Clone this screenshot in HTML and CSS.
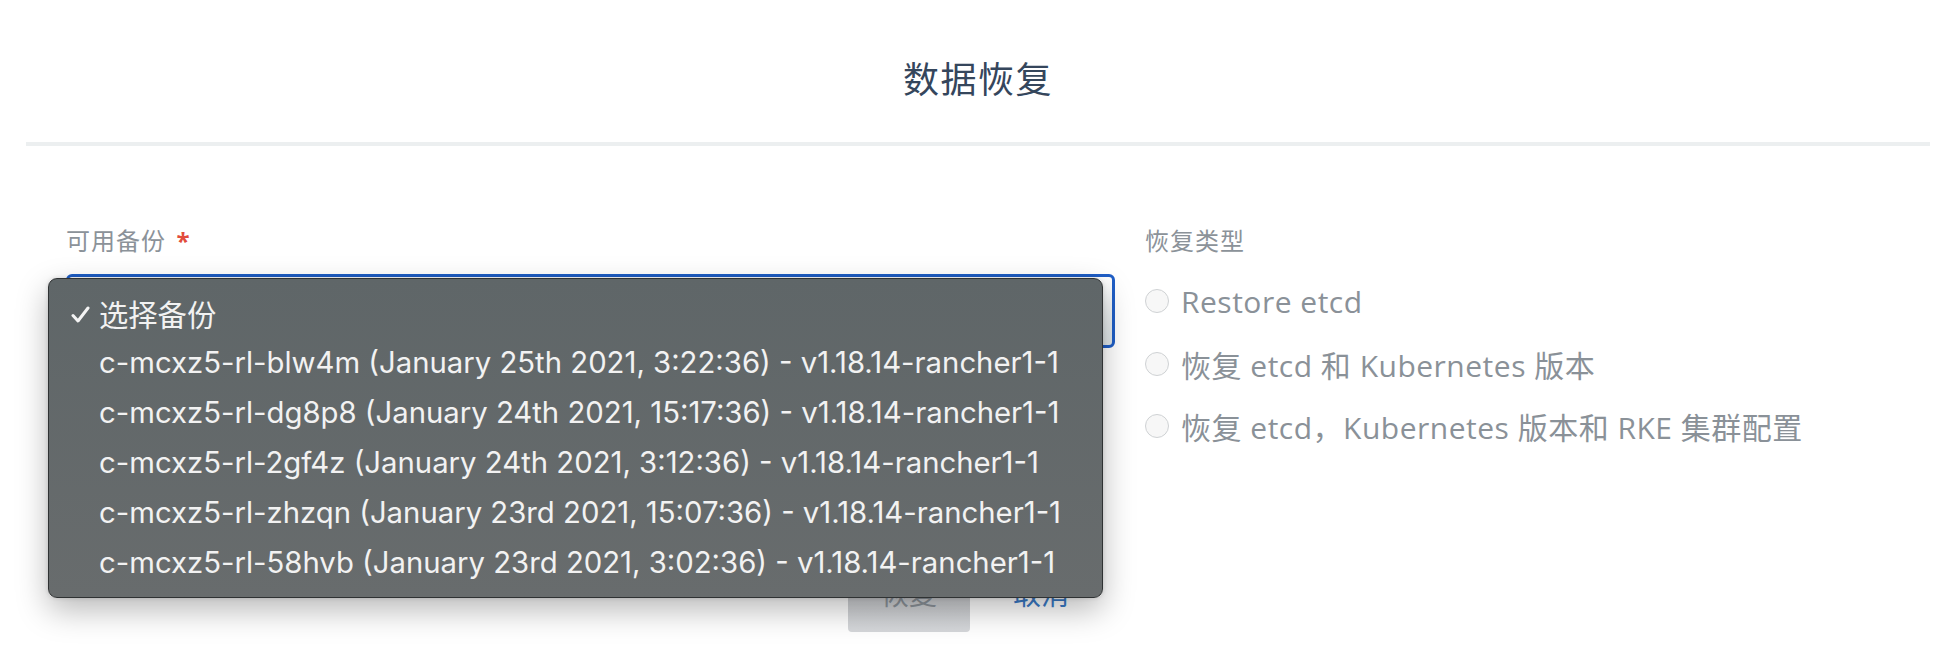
FILE: index.html
```html
<!DOCTYPE html>
<html lang="zh">
<head>
<meta charset="utf-8">
<title>数据恢复</title>
<link rel="stylesheet" href="styles.css">
</head>
<body>
<div class="page">
  <header class="header">
    <h1 class="title">数据恢复</h1>
  </header>
  <div class="divider"></div>
  <div class="form">
    <div class="row">
      <div class="col-left">
        <label class="field-label">可用备份 <span class="req">*</span></label>
        <div class="select"></div>
      </div>
      <div class="col-right">
        <div class="field-label">恢复类型</div>
        <div class="radio-list">
          <label class="radio"><span class="dot"></span><span class="radio-text">Restore etcd</span></label>
          <label class="radio"><span class="dot"></span><span class="radio-text">恢复 etcd 和 Kubernetes 版本</span></label>
          <label class="radio"><span class="dot"></span><span class="radio-text">恢复 etcd，Kubernetes 版本和 RKE 集群配置</span></label>
        </div>
      </div>
    </div>
    <div class="actions">
      <button class="btn-primary" disabled>恢复</button>
      <a class="btn-link">取消</a>
    </div>
  </div>

  <div class="menu">
    <div class="menu-item selected"><svg class="check" width="19" height="17" viewBox="0 0 19 17"><path d="M2 9.5 L7 15 L17 2" fill="none" stroke="#f4f4f4" stroke-width="3" stroke-linecap="round" stroke-linejoin="round"/></svg><span class="cjk">选择备份</span></div>
    <div class="menu-item">c-mcxz5-rl-blw4m (January 25th 2021, 3:22:36) - v1.18.14-rancher1-1</div>
    <div class="menu-item">c-mcxz5-rl-dg8p8 (January 24th 2021, 15:17:36) - v1.18.14-rancher1-1</div>
    <div class="menu-item">c-mcxz5-rl-2gf4z (January 24th 2021, 3:12:36) - v1.18.14-rancher1-1</div>
    <div class="menu-item">c-mcxz5-rl-zhzqn (January 23rd 2021, 15:07:36) - v1.18.14-rancher1-1</div>
    <div class="menu-item">c-mcxz5-rl-58hvb (January 23rd 2021, 3:02:36) - v1.18.14-rancher1-1</div>
  </div>
</div>
</body>
</html>
```
FILE: styles.css
```css
html, body {
  margin: 0;
  padding: 0;
  background: #ffffff;
}
body {
  font-family: "Open Sans", "Noto Sans CJK SC", sans-serif;
  width: 1956px;
  height: 666px;
  overflow: hidden;
}
.page {
  position: relative;
  height: 666px;
}
.header {
  height: 142px;
  display: flex;
  justify-content: center;
}
.title {
  margin: 57px 0 0 0;
  font-family: "Noto Sans CJK SC", sans-serif;
  font-weight: 400;
  font-size: 36px;
  line-height: 40px;
  color: #35465c;
  letter-spacing: 1.5px;
}
.divider {
  height: 4px;
  margin: 0 26px;
  background: #eceff0;
}
.form {
  padding: 0 0 0 66px;
}
.row {
  display: flex;
  gap: 30px;
  margin-top: 80px;
}
.col-left {
  width: 1049px;
}
.col-right {
  flex: 1;
}
.field-label {
  display: block;
  font-family: "Noto Sans CJK SC", sans-serif;
  font-size: 24px;
  line-height: 28px;
  color: #8b9299;
  letter-spacing: 1px;
}
.req {
  color: #e24c3c;
  margin-left: 4px;
  font-family: "Open Sans", sans-serif;
  font-weight: 700;
}
.select {
  margin-top: 19px;
  height: 68px;
  border: 3px solid #1f5ec6;
  border-radius: 6px;
  background: linear-gradient(#ffffff, #dfe6e8);
}
.radio-list {
  display: flex;
  flex-direction: column;
  margin-top: 16px;
}
.radio {
  display: flex;
  align-items: center;
  height: 62.5px;
  font-size: 30px;
  color: #8a9198;
}
.dot {
  width: 22px;
  height: 22px;
  border-radius: 50%;
  border: 1px solid #cfd2d4;
  background: #f7f7f7;
  margin-right: 12px;
  flex-shrink: 0;
}
.radio-text {
  font-family: "Open Sans", "Noto Sans CJK SC", sans-serif;
  letter-spacing: 0.5px;
}
.actions {
  display: flex;
  align-items: flex-start;
  padding-left: 782px;
  margin-top: 110px;
}
.btn-primary {
  width: 122px;
  height: 64px;
  padding: 0 0 14px 0;
  border: none;
  border-radius: 4px;
  background: linear-gradient(#c3c5c8, #d6d8db);
  color: #8c939a;
  font-family: "Noto Sans CJK SC", sans-serif;
  font-size: 28px;
  line-height: 50px;
}
.btn-link {
  margin-left: 43px;
  color: #3a7bc8;
  font-family: "Noto Sans CJK SC", sans-serif;
  font-size: 28px;
  line-height: 50px;
}
.menu {
  position: absolute;
  left: 48px;
  top: 278px;
  width: 1055px;
  height: 320px;
  padding: 9px 0;
  box-sizing: border-box;
  background: linear-gradient(#5f6668, #686c6d);
  border: 1px solid #2f3233;
  border-radius: 9px;
  box-shadow: 0 12px 32px rgba(0, 0, 0, 0.28), 0 0 4px rgba(0, 0, 0, 0.15);
  font-family: "Inter", "Noto Sans CJK SC", sans-serif;
  font-size: 29.3px;
  color: #f2f2f2;
}
.menu-item {
  position: relative;
  height: 50px;
  line-height: 50px;
  padding-left: 50px;
  white-space: nowrap;
}
.check {
  position: absolute;
  left: 22px;
  top: 18px;
}
.cjk {
  font-family: "Noto Sans CJK SC", sans-serif;
}
```
